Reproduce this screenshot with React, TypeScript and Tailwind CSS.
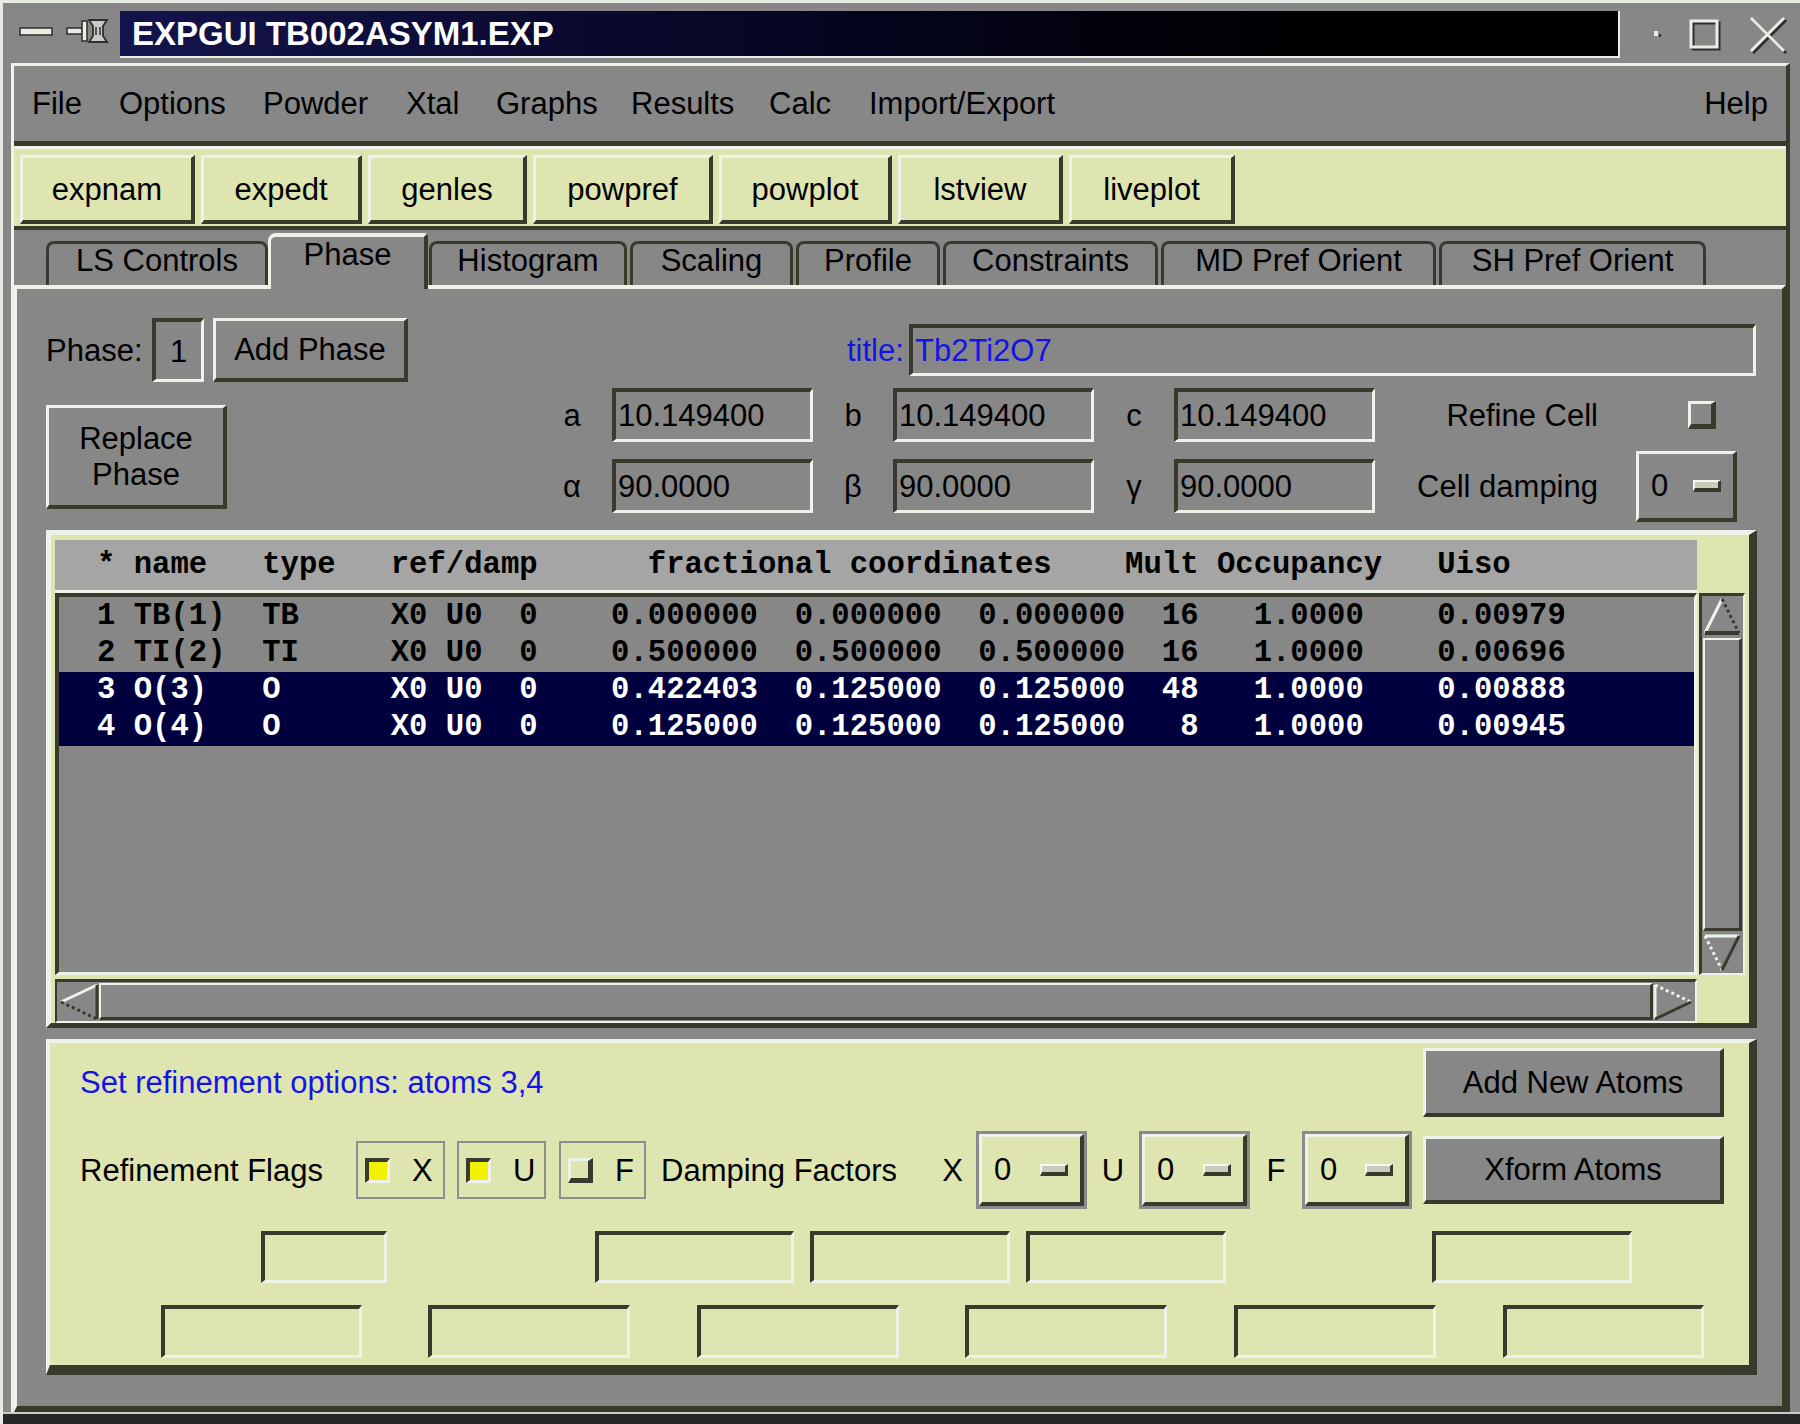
import React from 'react';

// Tk-style bevels
const raised =
  'border-solid border-t-[3px] border-l-[3px] border-r-[4px] border-b-[4px] border-t-[#eef3ea] border-l-[#eef3ea] border-r-[#3a3a2c] border-b-[#3a3a2c]';
const sunken =
  'border-solid border-t-[4px] border-l-[4px] border-r-[3px] border-b-[3px] border-t-[#3a3a2c] border-l-[#3a3a2c] border-r-[#eef3ea] border-b-[#eef3ea]';

const at = (parts: [number, string][]) => parts.reduce((s, [c, t]) => s.padEnd(c, ' ') + t, '');

const header = at([[0, '*'], [2, 'name'], [9, 'type'], [16, 'ref/damp'], [30, 'fractional coordinates'], [56, 'Mult'], [61, 'Occupancy'], [73, 'Uiso']]);

const atoms = [
  { sel: false, text: at([[0, '1'], [2, 'TB(1)'], [9, 'TB'], [16, 'X0'], [19, 'U0'], [23, '0'], [28, '0.000000'], [38, '0.000000'], [48, '0.000000'], [58, '16'], [63, '1.0000'], [73, '0.00979']]) },
  { sel: false, text: at([[0, '2'], [2, 'TI(2)'], [9, 'TI'], [16, 'X0'], [19, 'U0'], [23, '0'], [28, '0.500000'], [38, '0.500000'], [48, '0.500000'], [58, '16'], [63, '1.0000'], [73, '0.00696']]) },
  { sel: true, text: at([[0, '3'], [2, 'O(3)'], [9, 'O'], [16, 'X0'], [19, 'U0'], [23, '0'], [28, '0.422403'], [38, '0.125000'], [48, '0.125000'], [58, '48'], [63, '1.0000'], [73, '0.00888']]) },
  { sel: true, text: at([[0, '4'], [2, 'O(4)'], [9, 'O'], [16, 'X0'], [19, 'U0'], [23, '0'], [28, '0.125000'], [38, '0.125000'], [48, '0.125000'], [59, '8'], [63, '1.0000'], [73, '0.00945']]) },
];

const menus = [
  { label: 'File', w: 'w-[87px]' },
  { label: 'Options', w: 'w-[144px]' },
  { label: 'Powder', w: 'w-[143px]' },
  { label: 'Xtal', w: 'w-[90px]' },
  { label: 'Graphs', w: 'w-[135px]' },
  { label: 'Results', w: 'w-[138px]' },
  { label: 'Calc', w: 'w-[100px]' },
  { label: 'Import/Export', w: 'w-[220px]' },
];

const tools = [
  { label: 'expnam', w: 'w-[175px]' },
  { label: 'expedt', w: 'w-[161px]' },
  { label: 'genles', w: 'w-[159px]' },
  { label: 'powpref', w: 'w-[180px]' },
  { label: 'powplot', w: 'w-[173px]' },
  { label: 'lstview', w: 'w-[165px]' },
  { label: 'liveplot', w: 'w-[166px]' },
];

const tabs = [
  { label: 'LS Controls', cls: 'ml-[32px] w-[222px]' },
  { label: 'Phase', cls: 'w-[160px]', active: true },
  { label: 'Histogram', cls: 'ml-[1px] w-[198px]' },
  { label: 'Scaling', cls: 'ml-[3px] w-[163px]' },
  { label: 'Profile', cls: 'ml-[3px] w-[144px]' },
  { label: 'Constraints', cls: 'ml-[3px] w-[215px]' },
  { label: 'MD Pref Orient', cls: 'ml-[3px] w-[275px]' },
  { label: 'SH Pref Orient', cls: 'ml-[3px] w-[267px]' },
];

function Entry({ value, cls }: { value?: string; cls: string }) {
  return (
    <div className={`${sunken} ${cls} flex items-center pl-[2px] overflow-hidden whitespace-nowrap`}>
      {value}
    </div>
  );
}

function Indicator() {
  return (
    <div className="w-[28px] h-[12px] border-t-[2px] border-l-[2px] border-t-[#f4f8f0] border-l-[#f4f8f0] border-b-[4px] border-r-[3px] border-b-[#3a3a2c] border-r-[#3a3a2c] bg-[#c9ccbb]" />
  );
}

function MenuBtn({ cls }: { cls: string }) {
  return (
    <div className={`${cls} border-[3px] border-[#8a8a8a] h-[78px]`}>
      <div className={`${raised} h-full bg-[#dfe5b0] flex items-center justify-between pl-[12px] pr-[12px]`}>
        <span>0</span>
        <Indicator />
      </div>
    </div>
  );
}

function Check({ label, on, cls }: { label: string; on: boolean; cls: string }) {
  return (
    <div className={`${cls} h-[58px] border-[2px] border-[#8e8e8e] flex items-center pl-[7px]`}>
      {on ? (
        <div className="w-[25px] h-[25px] border-t-[4px] border-l-[4px] border-t-[#3a3a2c] border-l-[#3a3a2c] border-b-[3px] border-r-[3px] border-b-[#eef3ea] border-r-[#eef3ea] bg-[#f2f200]" />
      ) : (
        <div className="w-[25px] h-[25px] border-t-[3px] border-l-[3px] border-t-[#eef3ea] border-l-[#eef3ea] border-b-[5px] border-r-[5px] border-b-[#3a3a2c] border-r-[#3a3a2c] bg-[#dfe5b0]" />
      )}
      <span className="ml-[22px]">{label}</span>
    </div>
  );
}

function UpArrow() {
  return (
    <svg width="40" height="40" viewBox="0 0 40 40">
      <line x1="3" y1="37" x2="20" y2="3" stroke="#eef3ea" strokeWidth="3" />
      <line x1="20" y1="3" x2="37" y2="37" stroke="#3a3a2c" strokeWidth="3" strokeDasharray="3 3" />
      <line x1="3" y1="37" x2="37" y2="37" stroke="#3a3a2c" strokeWidth="4" />
    </svg>
  );
}

function DownArrow() {
  return (
    <svg width="40" height="40" viewBox="0 0 40 40">
      <line x1="3" y1="3" x2="37" y2="3" stroke="#eef3ea" strokeWidth="3" />
      <line x1="3" y1="3" x2="20" y2="37" stroke="#eef3ea" strokeWidth="3" strokeDasharray="3 3" />
      <line x1="20" y1="37" x2="37" y2="3" stroke="#3a3a2c" strokeWidth="3" />
    </svg>
  );
}

function LeftArrow() {
  return (
    <svg width="42" height="40" viewBox="0 0 42 40">
      <line x1="40" y1="3" x2="4" y2="20" stroke="#eef3ea" strokeWidth="3" />
      <line x1="4" y1="20" x2="40" y2="37" stroke="#3a3a2c" strokeWidth="3" strokeDasharray="3 3" />
      <line x1="40" y1="3" x2="40" y2="37" stroke="#3a3a2c" strokeWidth="3" />
    </svg>
  );
}

function RightArrow() {
  return (
    <svg width="42" height="40" viewBox="0 0 42 40">
      <line x1="2" y1="3" x2="2" y2="37" stroke="#eef3ea" strokeWidth="3" />
      <line x1="2" y1="3" x2="38" y2="20" stroke="#eef3ea" strokeWidth="3" strokeDasharray="3 3" />
      <line x1="38" y1="20" x2="2" y2="37" stroke="#3a3a2c" strokeWidth="3" />
    </svg>
  );
}

export default function App() {
  return (
    <div className="w-[1800px] h-[1424px] overflow-hidden bg-[#878787] border-t-[3px] border-l-[3px] border-t-[#e6ece4] border-l-[#e6ece4] font-['Liberation_Sans',sans-serif] text-[31px] text-black leading-none">
      {/* window title bar */}
      <div className="flex h-[57px] items-start">
        <svg width="117" height="57" viewBox="0 0 117 57">
          <rect x="17" y="25" width="32" height="7" fill="#e8eee4" stroke="#2e2e2e" strokeWidth="1.5" />
          <rect x="64" y="25" width="15" height="6" fill="#e8eee4" stroke="#2e2e2e" strokeWidth="1.5" />
          <rect x="79" y="18" width="5" height="20" fill="#e8eee4" stroke="#2e2e2e" strokeWidth="1.5" />
          <path d="M86 17 L104 17 L100 23 L100 33 L104 39 L86 39 L90 33 L90 23 Z" fill="#c8ccc4" stroke="#2e2e2e" strokeWidth="1.8" />
          <line x1="93" y1="24" x2="93" y2="32" stroke="#2e2e2e" strokeWidth="1.5" />
          <line x1="97" y1="24" x2="97" y2="32" stroke="#2e2e2e" strokeWidth="1.5" />
        </svg>
        <div className="mt-[8px] w-[1500px] h-[47px] bg-gradient-to-r from-[#14144c] via-[#05051e] to-black border-b-[2px] border-r-[2px] border-b-[#e8eee4] border-r-[#e8eee4] flex items-center pl-[12px]">
          <span className="text-white font-bold text-[33px]">EXPGUI TB002ASYM1.EXP</span>
        </div>
        <svg width="177" height="57" viewBox="0 0 177 57">
          <rect x="34" y="28" width="4" height="5" fill="#e8eee4" />
          <rect x="39" y="31" width="2" height="3" fill="#2e2e2e" />
          <rect x="73" y="20" width="26" height="26" fill="none" stroke="#2e2e2e" strokeWidth="3" />
          <rect x="71" y="18" width="26" height="26" fill="none" stroke="#e8eee4" strokeWidth="3" />
          <path d="M133 17 L166 50 M166 17 L133 50" stroke="#2e2e2e" strokeWidth="3" />
          <path d="M131 15 L164 48 M164 15 L131 48" stroke="#e8eee4" strokeWidth="3" />
        </svg>
      </div>

      {/* application frame */}
      <div className="mt-[3px] ml-[8px] w-[1779px] border-t-[3px] border-l-[3px] border-t-[#eef3ea] border-l-[#eef3ea] border-r-[4px] border-r-[#3a3a2c]">
        {/* menu bar */}
        <div className="h-[80px] border-b-[5px] border-b-[#3a3a2c] flex items-center">
          <div className="ml-[18px] flex">
            {menus.map((m) => (
              <span key={m.label} className={m.w}>
                {m.label}
              </span>
            ))}
          </div>
          <span className="ml-auto mr-[18px]">Help</span>
        </div>

        {/* tool buttons */}
        <div className="h-[84px] bg-[#dfe5b0] border-t-[3px] border-t-[#eef3ea] border-b-[4px] border-b-[#3a3a2c] flex gap-[6px] pl-[6px] pt-[6px]">
          {tools.map((t) => (
            <div key={t.label} className={`${raised} ${t.w} h-[69px] bg-[#dfe5b0] flex items-center justify-center`}>
              {t.label}
            </div>
          ))}
        </div>

        {/* notebook tabs */}
        <div className="h-[55px] flex items-end">
          {tabs.map((t) =>
            t.active ? (
              <div
                key={t.label}
                className={`${t.cls} relative z-10 h-[56px] -mb-[4px] bg-[#878787] border-t-[4px] border-l-[3px] border-r-[4px] border-t-[#eef3ea] border-l-[#eef3ea] border-r-[#3a3a2c] rounded-tl-[8px] rounded-tr-[4px] flex justify-center pt-[2px]`}
              >
                {t.label}
              </div>
            ) : (
              <div
                key={t.label}
                className={`${t.cls} h-[44px] border-t-[3px] border-l-[3px] border-r-[3px] border-t-[#3a3a2c] border-l-[#3a3a2c] border-r-[#3a3a2c] rounded-tl-[8px] rounded-tr-[8px] flex justify-center pt-[1px]`}
              >
                {t.label}
              </div>
            )
          )}
        </div>

        {/* Phase page */}
        <div className="h-[1127px] border-t-[4px] border-l-[3px] border-t-[#eef3ea] border-l-[#eef3ea] border-r-[4px] border-b-[6px] border-r-[#3a3a2c] border-b-[#3a3a2c] pl-[29px] pt-[29px]">
          {/* phase + title row */}
          <div className="flex items-center h-[64px]">
            <span className="w-[106px]">Phase:</span>
            <div className={`${sunken} w-[52px] h-[64px] flex items-end justify-center pb-[12px]`}>1</div>
            <div className={`${raised} ml-[9px] w-[195px] h-[64px] flex items-center justify-center`}>Add Phase</div>
            <span className="ml-[439px] w-[62px] text-[#1414e6]">title:</span>
            <Entry value="Tb2Ti2O7" cls="w-[847px] h-[52px] text-[#1414e6]" />
          </div>

          {/* replace phase + cell */}
          <div className="flex">
            <div className={`${raised} mt-[23px] w-[181px] h-[104px] flex flex-col items-center justify-center gap-[5px]`}>
              <span>Replace</span>
              <span>Phase</span>
            </div>
            <div className="ml-[305px] mt-[6px] flex flex-col gap-[17px]">
              <div className="flex items-center h-[54px]">
                <span className="w-[80px] text-center">a</span>
                <Entry value="10.149400" cls="w-[201px] h-[54px]" />
                <span className="w-[80px] text-center">b</span>
                <Entry value="10.149400" cls="w-[201px] h-[54px]" />
                <span className="w-[80px] text-center">c</span>
                <Entry value="10.149400" cls="w-[201px] h-[54px]" />
                <span className="w-[223px] text-right">Refine Cell</span>
                <div className="ml-[90px] w-[28px] h-[28px] border-t-[3px] border-l-[3px] border-t-[#eef3ea] border-l-[#eef3ea] border-b-[5px] border-r-[5px] border-b-[#3a3a2c] border-r-[#3a3a2c]" />
              </div>
              <div className="flex items-center h-[54px]">
                <span className="w-[80px] text-center">α</span>
                <Entry value="90.0000" cls="w-[201px] h-[54px]" />
                <span className="w-[80px] text-center">β</span>
                <Entry value="90.0000" cls="w-[201px] h-[54px]" />
                <span className="w-[80px] text-center">γ</span>
                <Entry value="90.0000" cls="w-[201px] h-[54px]" />
                <span className="w-[223px] text-right">Cell damping</span>
                <div className={`${raised} shrink-0 ml-[38px] w-[101px] h-[71px] flex items-center justify-between pl-[12px] pr-[12px]`}>
                  <span>0</span>
                  <Indicator />
                </div>
              </div>
            </div>
          </div>

          {/* atom table */}
          <div className="mt-[17px] w-[1711px] h-[498px] bg-[#dfe5b0] border-t-[5px] border-l-[5px] border-t-[#eef3ea] border-l-[#eef3ea] border-r-[8px] border-b-[5px] border-r-[#3a3a2c] border-b-[#3a3a2c] pt-[5px] pl-[4px]">
            <div className="flex">
              <div className="w-[1642px] h-[53px] bg-[#a5a5a5] border-b-[3px] border-b-[#eef3ea] flex items-center pl-[42px] font-['Liberation_Mono',monospace] font-bold text-[30.6px] whitespace-pre">
                {header}
              </div>
            </div>
            <div className="flex">
              <div className={`${sunken} w-[1642px] h-[382px] bg-[#878787] pt-[1px] font-['Liberation_Mono',monospace] font-bold text-[30.6px] whitespace-pre`}>
                {atoms.map((a, i) => (
                  <div
                    key={i}
                    className={`h-[37px] flex items-center pl-[38px] ${a.sel ? 'bg-[#00003f] text-white' : ''}`}
                  >
                    {a.text}
                  </div>
                ))}
              </div>
              <div className="ml-[2px] w-[46px] h-[382px] bg-[#878787] border-t-[3px] border-l-[3px] border-t-[#3a3a2c] border-l-[#3a3a2c] border-r-[2px] border-b-[2px] border-r-[#eef3ea] border-b-[#eef3ea] flex flex-col">
                <UpArrow />
                <div className="flex-1 mx-[1px] my-[2px] border-t-[2px] border-l-[2px] border-t-[#eef3ea] border-l-[#eef3ea] border-b-[3px] border-r-[3px] border-b-[#3a3a2c] border-r-[#3a3a2c]" />
                <DownArrow />
              </div>
            </div>
            <div className="flex mt-[4px]">
              <div className="w-[1642px] h-[44px] bg-[#878787] border-t-[3px] border-l-[2px] border-t-[#3a3a2c] border-l-[#3a3a2c] border-r-[2px] border-b-[2px] border-r-[#eef3ea] border-b-[#eef3ea] flex">
                <LeftArrow />
                <div className="flex-1 my-[1px] border-t-[2px] border-l-[2px] border-t-[#eef3ea] border-l-[#eef3ea] border-b-[3px] border-r-[3px] border-b-[#3a3a2c] border-r-[#3a3a2c]" />
                <RightArrow />
              </div>
            </div>
          </div>

          {/* refinement options */}
          <div className="mt-[11px] w-[1711px] h-[336px] bg-[#dfe5b0] border-t-[4px] border-l-[4px] border-t-[#eef3ea] border-l-[#eef3ea] border-r-[8px] border-b-[10px] border-r-[#3a3a2c] border-b-[#3a3a2c]">
            <div className="mt-[5px] h-[69px] flex items-center">
              <span className="ml-[30px] text-[#1414e6]">Set refinement options: atoms 3,4</span>
              <div className={`${raised} ml-auto mr-[25px] w-[301px] h-[69px] bg-[#878787] flex items-center justify-center`}>
                Add New Atoms
              </div>
            </div>
            <div className="mt-[14px] h-[78px] flex items-center">
              <span className="pl-[30px] w-[306px]">Refinement Flags</span>
              <Check label="X" on cls="w-[89px]" />
              <Check label="U" on cls="ml-[12px] w-[89px]" />
              <Check label="F" on={false} cls="ml-[13px] w-[87px]" />
              <span className="w-[283px] pl-[15px]">Damping Factors</span>
              <span className="w-[47px] text-center">X</span>
              <MenuBtn cls="w-[111px]" />
              <span className="w-[52px] text-center">U</span>
              <MenuBtn cls="w-[111px]" />
              <span className="w-[52px] text-center">F</span>
              <MenuBtn cls="w-[110px]" />
              <div className={`${raised} ml-[11px] w-[301px] h-[68px] bg-[#878787] flex items-center justify-center`}>
                Xform Atoms
              </div>
            </div>
            <div className="mt-[22px] h-[52px] flex">
              <Entry cls="ml-[211px] w-[126px] h-[52px]" />
              <Entry cls="ml-[208px] w-[199px] h-[52px]" />
              <Entry cls="ml-[16px] w-[200px] h-[52px]" />
              <Entry cls="ml-[16px] w-[200px] h-[52px]" />
              <Entry cls="ml-[206px] w-[200px] h-[52px]" />
            </div>
            <div className="mt-[22px] h-[53px] flex">
              <Entry cls="ml-[111px] w-[201px] h-[53px]" />
              <Entry cls="ml-[66px] w-[202px] h-[53px]" />
              <Entry cls="ml-[67px] w-[202px] h-[53px]" />
              <Entry cls="ml-[66px] w-[202px] h-[53px]" />
              <Entry cls="ml-[67px] w-[202px] h-[53px]" />
              <Entry cls="ml-[67px] w-[201px] h-[53px]" />
            </div>
          </div>
        </div>
      </div>
      <div className="h-[12px] border-t-[2px] border-t-[#c8ccc4] bg-[#262626]" />
    </div>
  );
}
